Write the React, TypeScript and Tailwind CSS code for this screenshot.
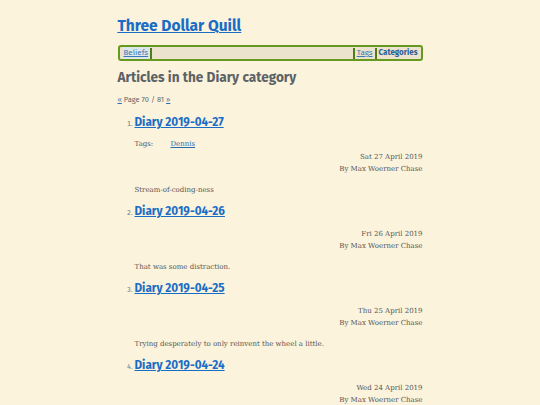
const heading = { fontFamily: '"Fira Sans", "Open Sans", "Noto Sans", sans-serif' }
const body = { fontFamily: '"Roboto Slab", "DejaVu Serif", serif' }

type Post = { title: string; date: string; tags?: string[]; summary: string }

const posts: Post[] = [
  { title: 'Diary 2019-04-27', date: 'Sat 27 April 2019', tags: ['Dennis'], summary: 'Stream-of-coding-ness' },
  { title: 'Diary 2019-04-26', date: 'Fri 26 April 2019', summary: 'That was some distraction.' },
  { title: 'Diary 2019-04-25', date: 'Thu 25 April 2019', summary: 'Trying desperately to only reinvent the wheel a little.' },
  { title: 'Diary 2019-04-24', date: 'Wed 24 April 2019', summary: '' },
]

function PostItem({ post }: { post: Post }) {
  return (
    <li className="text-[7px] text-[#666] marker:text-[#777]" style={heading}>
      <a href="#" className="text-[11.7px] font-bold leading-[16px] text-[#1a6dc6] underline">
        {post.title}
      </a>
      <div className="text-[7px] text-[#555]" style={body}>
        {post.tags && (
          <div className="mt-[9px] flex">
            <span className="w-[36px]">Tags:</span>
            {post.tags.map((t) => (
              <a key={t} href="#" className="text-[#2b6cb0] underline">
                {t}
              </a>
            ))}
          </div>
        )}
        <div className={`${post.tags ? 'mt-[1px]' : 'mt-[9px]'} text-right leading-[12px]`}>
          <div>{post.date}</div>
          <div>By Max Woerner Chase</div>
        </div>
        {post.summary && <p className="mt-[9px] leading-[12px]">{post.summary}</p>}
        <div className="h-[7px]" />
      </div>
    </li>
  )
}

export default function App() {
  return (
    <div className="min-h-[405px] bg-[#fbf3dc] pt-[15px]">
      <div className="mx-auto w-[305px]">
        <h1 className="text-[15.5px] font-bold leading-[22px] text-[#1a6dc6] underline" style={heading}>
          <a href="#">Three Dollar Quill</a>
        </h1>

        <nav
          className="mt-[8px] flex h-[16px] items-center rounded-[3px] border-2 border-[#66991f] bg-[#ebe3cd] pl-[3px] pr-[1px] text-[8px] leading-[12px]"
          style={heading}
        >
          <a href="#" className="bg-[#dde6e8] px-[1px] text-[#3b78b8] underline">
            Beliefs
          </a>
          <span className="ml-[1px] h-[11px] w-[2px] bg-[#4f7f14]" />
          <span className="flex-1" />
          <span className="h-[11px] w-[2px] bg-[#4f7f14]" />
          <a href="#" className="px-[2px] text-[#3b78b8] underline">
            Tags
          </a>
          <span className="h-[11px] w-[2px] bg-[#4f7f14]" />
          <span className="px-[2px] font-bold text-[#2e5e96]">Categories</span>
        </nav>

        <h2 className="mt-[8px] text-[13.6px] font-bold leading-[18px] text-[#5b6266]" style={heading}>
          Articles in the Diary category
        </h2>

        <div className="mt-[8px] text-[7.5px] leading-[10px] text-[#666]" style={heading}>
          <a href="#" className="text-[#2b6cb0] underline">«</a> Page 70 / 81{' '}
          <a href="#" className="text-[#2b6cb0] underline">»</a>
        </div>

        <ol className="mt-[9px] list-decimal pl-[17px]">
          {posts.map((p) => (
            <PostItem key={p.title} post={p} />
          ))}
        </ol>
      </div>
    </div>
  )
}
